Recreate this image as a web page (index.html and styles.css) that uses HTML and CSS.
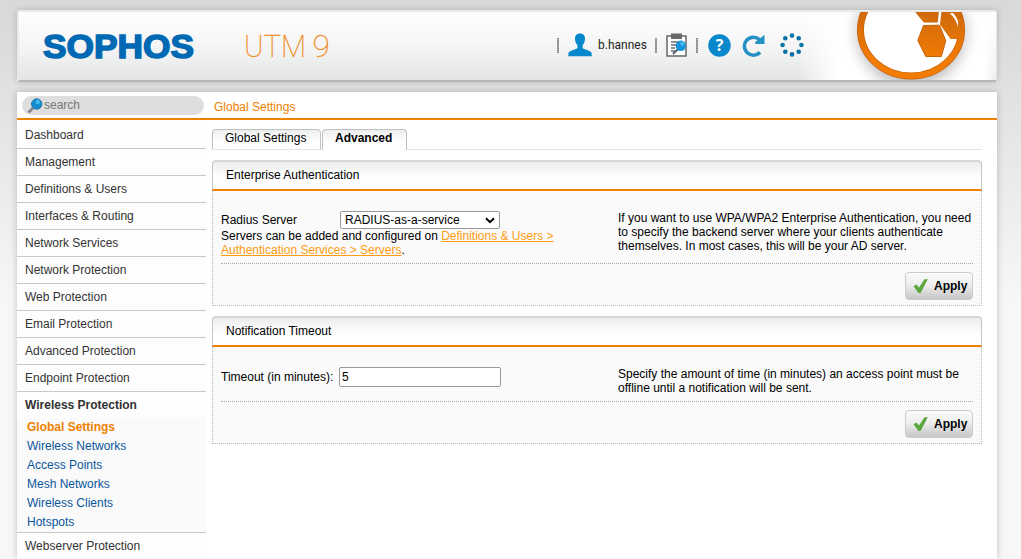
FILE: index.html
```html
<!DOCTYPE html>
<html lang="en">
<head>
<meta charset="utf-8">
<title>Sophos UTM 9 - Global Settings</title>
<link rel="stylesheet" href="styles.css">
</head>
<body>
<header class="topbar">
  <svg class="brand" width="340" height="54" viewBox="0 0 340 54">
    <text class="brand-name" x="6" y="37.500" textLength="151" lengthAdjust="spacingAndGlyphs">SOPHOS</text>
    <text class="brand-product" x="207" y="37" textLength="62" lengthAdjust="spacingAndGlyphs">UTM</text>
    <text class="brand-product" x="275.500" y="37">9</text>
  </svg>
  <div class="tools">
    <i class="sep"></i>
    <svg class="user-icon" width="24" height="24" viewBox="0 0 24 24"><path fill="#0788cc" d="M12 .5c3.500 0 5.200 2.400 5 5.600-.1 3-1.200 4.700-2.300 6v3.200c2 1.500 8.800 2.200 9 5.200v2.800H.4v-2.800c.2-3 7-3.700 9-5.200v-3.200C8.200 10.800 7.100 9.100 7 6.100 6.800 2.900 8.500.5 12 .5z"/></svg>
    <span class="user">b.hannes</span>
    <i class="sep"></i>
    <svg class="clip-icon" width="22" height="24" viewBox="0 0 22 24">
      <path fill="#fff" stroke="#646668" stroke-width="1.500" d="M1 3h19v20H1z"/>
      <path fill="#68696b" d="M5 .5h11V6H5z"/>
      <path stroke="#696b6d" stroke-width="1.300" d="M5 9h8M5 12h5M5 15h4M5 18h4"/>
      <path stroke="#54616a" stroke-width="2" d="M11.500 16.500 7 21"/>
      <circle cx="14.800" cy="12.700" r="5.200" fill="#1493db"/><circle cx="16.200" cy="10.800" r="2" fill="#4bb7ee"/>
    </svg>
    <i class="sep"></i>
    <svg class="help-icon" width="23" height="23" viewBox="0 0 23 23"><circle cx="11.500" cy="11.500" r="11.200" fill="#0788cc"/><text class="help-mark" x="11.500" y="17">?</text></svg>
    <svg class="reload-icon" width="23" height="23" viewBox="0 0 23 23"><path fill="none" stroke="#2490c3" stroke-width="3.500" d="M17.500 5.500A9 9 0 1 0 18 18.300"/><path fill="#2490c3" d="M22.500.8v9.200h-9.200v-2z"/></svg>
    <svg class="dots-icon" width="24" height="24" viewBox="0 0 24 24" fill="#0872a9"><circle cx="12" cy="2.600" r="2.300"/><circle cx="18.700" cy="5.300" r="2.300"/><circle cx="21.400" cy="12" r="2.300"/><circle cx="18.700" cy="18.700" r="2.300"/><circle cx="12" cy="21.400" r="2.300"/><circle cx="5.300" cy="18.700" r="2.300"/><circle cx="2.600" cy="12" r="2.300"/><circle cx="5.300" cy="5.300" r="2.300"/></svg>
  </div>
  <svg class="emblem" width="198" height="68" viewBox="798 12 198 68">
    <defs>
      <linearGradient id="fade"><stop offset="0" stop-color="#fff" stop-opacity="0"/><stop offset=".2" stop-color="#fff"/><stop offset=".94" stop-color="#fff"/><stop offset="1" stop-color="#fff" stop-opacity=".3"/></linearGradient>
      <radialGradient id="halo"><stop offset=".7" stop-color="#c8c8c8"/><stop offset="1" stop-color="#fff" stop-opacity="0"/></radialGradient>
      <linearGradient id="ring" x1="0" y1="12" x2="0" y2="58" gradientUnits="userSpaceOnUse"><stop offset="0" stop-color="#cf6a0c"/><stop offset="1" stop-color="#f27b03"/></linearGradient>
    </defs>
    <path fill="url(#fade)" d="M798 12h198v68H798z"/>
    <circle cx="911" cy="32" r="70" fill="url(#halo)"/>
    <ellipse cx="911" cy="30" rx="50.500" ry="46" fill="#fff" stroke="#c96006" stroke-width="7"/>
    <ellipse cx="911" cy="30" rx="50.500" ry="46" fill="none" stroke="url(#ring)" stroke-width="5.500"/>
    <g fill="url(#ring)" stroke="#c76208" stroke-width="1">
      <path d="m923.500 25.500 16-.3 6.300 15.500-4.500 15.800h-15.500l-8-16z"/>
      <path d="M914 10h24.500l-1.200 12H924z"/>
      <path stroke="none" d="M941.500 11h14l6 12v13l-2.500 3h-8.500L940 24.500z"/>
      <path fill="#fff" stroke="none" d="M949.500 13.500c4.500 3 7 8 8.500 13.500v-6c-1.500-3.500-3-6-5-8z"/>
    </g>
  </svg>
</header>
<main class="page">
  <div class="page-head">
    <div class="search-area"><label class="search"><svg width="16" height="16" viewBox="0 0 16 16"><path stroke="#85888a" stroke-width="3" d="m1.500 14.500 5-5"/><circle cx="9.700" cy="6" r="5.200" fill="#128bd0" stroke="#277aa5"/><circle cx="10.800" cy="4" r="2.200" fill="#3fb7e9"/></svg><span>search</span></label></div>
    <div class="crumb">Global Settings</div>
  </div>
  <div class="columns">
    <nav class="side">
      <a class="item first">Dashboard</a><a class="item">Management</a><a class="item">Definitions &amp; Users</a><a class="item">Interfaces &amp; Routing</a><a class="item">Network Services</a><a class="item">Network Protection</a><a class="item">Web Protection</a><a class="item">Email Protection</a><a class="item">Advanced Protection</a><a class="item">Endpoint Protection</a><a class="item open">Wireless Protection</a>
      <div class="sub"><a class="current">Global Settings</a><a>Wireless Networks</a><a>Access Points</a><a>Mesh Networks</a><a>Wireless Clients</a><a>Hotspots</a></div>
      <a class="item">Webserver Protection</a>
    </nav>
    <div class="content">
      <div class="tabs"><a class="tab">Global Settings</a><a class="tab active">Advanced</a></div>
      <section class="panel">
        <h2 class="panel-title">Enterprise Authentication</h2>
        <div class="panel-body">
          <div class="fields">
            <div class="form">
              <div class="row radius"><label>Radius Server</label><div class="select"><span>RADIUS-as-a-service</span><svg width="10" height="7" viewBox="0 0 10 7"><path d="m1 1.200 4 4 4-4" fill="none" stroke="#000" stroke-width="2"/></svg></div></div>
              <p class="hint">Servers can be added and configured on <a>Definitions &amp; Users &gt;<br>Authentication Services &gt; Servers</a>.</p>
            </div>
            <p class="help">If you want to use WPA/WPA2 Enterprise Authentication, you need<br>to specify the backend server where your clients authenticate<br>themselves. In most cases, this will be your AD server.</p>
          </div>
          <div class="actions"><button class="apply"><svg width="16" height="16" viewBox="0 0 16 16"><path fill="#5ba63c" d="M.5 8.300 3.500 6.500 6 9.500 11.500 1.300h3.300L7.500 15h-2z"/></svg>Apply</button></div>
        </div>
      </section>
      <section class="panel">
        <h2 class="panel-title">Notification Timeout</h2>
        <div class="panel-body">
          <div class="fields short">
            <div class="form"><div class="row"><label>Timeout (in minutes):</label><input class="number" value="5"></div></div>
            <p class="help">Specify the amount of time (in minutes) an access point must be<br>offline until a notification will be sent.</p>
          </div>
          <div class="actions"><button class="apply"><svg width="16" height="16" viewBox="0 0 16 16"><path fill="#5ba63c" d="M.5 8.300 3.500 6.500 6 9.500 11.500 1.300h3.300L7.500 15h-2z"/></svg>Apply</button></div>
        </div>
      </section>
    </div>
  </div>
</main>
</body>
</html>
```
FILE: styles.css
```css
* { box-sizing: border-box; }
html { height: 100%; overflow: hidden; }
body {
  margin: 0; padding: 10px 24px 0 17px; height: 559px; overflow: hidden;
  background: linear-gradient(#d9d9d9 0, #d9d9d9 15px, #f7f7f7 300px);
  font: 12px/14px "Liberation Sans", Arial, sans-serif; color: #000;
}
svg { display: block; flex: none; }
p, h2 { margin: 0; }

.topbar {
  display: flex; width: 980px; height: 72px; overflow: hidden;
  border: solid #e9e9e9; border-width: 2px 1px 2px 2px; border-bottom-color: #b5b7b7;
  border-radius: 3px 3px 2px 2px;
  background: linear-gradient(#fff, #f5f5f5 50%, #e4e6e5);
  box-shadow: 0 0 6px rgba(0,0,0,.18);
  position: relative;
}
.brand { margin: 8px 0 0 18px; overflow: visible; }
.brand-name { font: bold 33px "Liberation Sans", Arial, sans-serif; fill: #0069b4; stroke: #0069b4; stroke-width: 1.5px; }
.brand-product { font: 100 31.500px Roboto, Inter, sans-serif; fill: #ef8a1c; stroke: #ef8a1c; stroke-width: .3px; }
.tools { display: flex; align-items: center; height: 66px; margin-left: 180px; position: relative; z-index: 1; }
.sep { width: 2px; height: 15px; background: repeating-linear-gradient(#888 0 1px, #aaa 1px 2px); }
.user-icon { margin-left: 9px; }
.user { margin: 0 8px 0 6px; width: 49px; font-family: Roboto, sans-serif; color: #222; }
.clip-icon { margin: 0 8px 0 9px; }
.help-icon { margin-left: 10px; }
.help-mark { font: bold 16px "Open Sans", sans-serif; fill: #fff; text-anchor: middle; }
.reload-icon { margin-left: 11px; }
.dots-icon { margin-left: 15px; }
.emblem { position: absolute; right: 0; top: 0; }

.page { width: 980px; height: 467px; margin-top: 10px; background: #fff; box-shadow: 0 0 7px rgba(0,0,0,.22); }
.page-head { display: flex; height: 28px; border-bottom: 2px solid #ee8100; }
.search-area { width: 197px; padding: 4px 0 0 5px; }
.search { display: flex; align-items: center; width: 182px; height: 19px; padding-left: 5px; border-radius: 10px; background: #dedede; color: #777; }
.search span { margin-left: 1px; line-height: 16px; padding-bottom: 2px; }
.crumb { padding-top: 8px; color: #ee8100; }
.columns { display: flex; }
.side { width: 189px; height: 439px; background: #fdfdfd; overflow: hidden; }
.item { display: block; height: 27px; padding: 6px 8px; border-bottom: 1px solid #c9c9c9; color: #333; }
.first { height: 29px; padding-top: 8px; }
.open { border: 0; height: 26px; font-weight: bold; }
.sub { height: 115px; background: #fafafa; border-bottom: 1px solid #c9c9c9; }
.sub a { display: block; height: 19px; padding: 2px 10px; color: #0b559d; }
.sub .current { color: #ee8100; font-weight: bold; }

.content { width: 770px; margin-left: 6px; padding-top: 9px; }
.tabs { display: flex; gap: 1px; height: 21px; border-bottom: 1px solid #e4e4e4; }
.tab { width: 109px; height: 20px; padding: 1px 0 0 12px; border: 1px solid #bfc1c1; border-bottom: 0; border-radius: 4px 4px 0 0; background: linear-gradient(#eceeed, #fff 60%); }
.active { width: 85px; height: 21px; font-weight: bold; }
.panel { margin-top: 10px; }
.panel-title { height: 31px; padding: 6px 13px; border: 1px solid #c3c5c5; border-top: 2px solid #d5d8d7; border-bottom: 2px solid #ee8100; border-radius: 4px 4px 0 0; background: linear-gradient(#eceeed, #fff 60%); font-size: 12px; font-weight: normal; }
.panel-body { padding: 20px 8px 5px; border: 1px dotted #b5b5b5; border-top: 0; background: #fafafa; }
.fields { display: flex; height: 53px; border-bottom: 1px dotted #a8a8a8; }
.short { height: 35px; }
.form { width: 397px; }
.row { display: flex; align-items: center; height: 20px; }
.row label { width: 118px; white-space: nowrap; }
.radius { height: 18px; }
.radius label { width: 119px; }
.select { display: flex; align-items: center; justify-content: space-between; width: 160px; height: 18px; padding: 0 4px; border: 1px solid #999; border-radius: 2px; background: #fff; }
.number { width: 162px; height: 20px; padding: 0 2px; border: 1px solid #999; border-radius: 2px; background: #fff; font: inherit; }
.hint a { color: #ff9c12; text-decoration: underline; }
.help { white-space: nowrap; }
.actions { padding-top: 8px; display: flex; justify-content: flex-end; }
.apply { display: flex; align-items: center; gap: 5px; width: 68px; height: 28px; padding: 0 0 0 7px; border: 1px solid #ccc; border-radius: 4px; background: linear-gradient(#fafafa, #eee 45%, #c6c6c6); font: bold 12px "Liberation Sans", Arial, sans-serif; color: #000; }
```
